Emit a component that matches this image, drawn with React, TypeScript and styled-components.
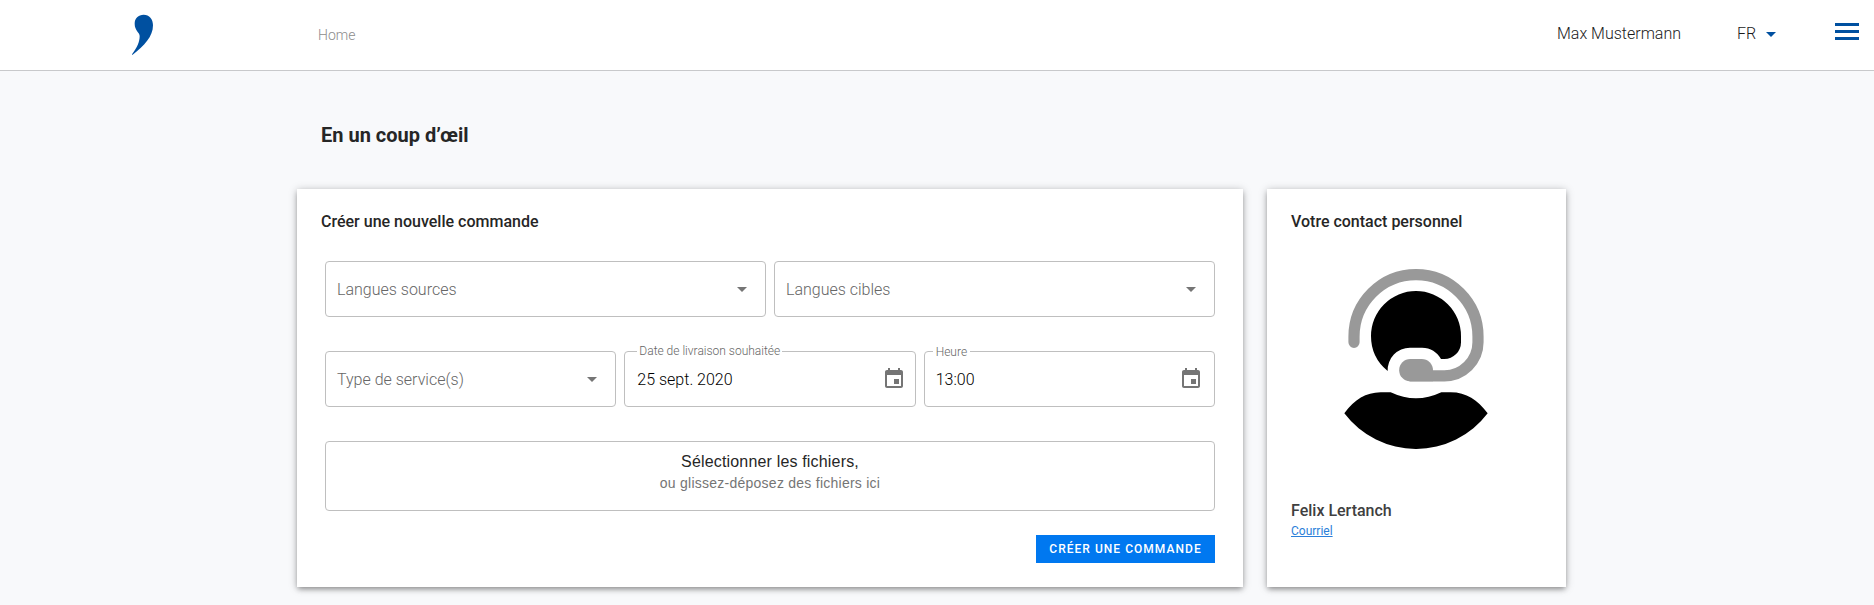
import React from "react";
import styled, { createGlobalStyle } from "styled-components";

const GlobalStyle = createGlobalStyle`
  *, *::before, *::after { box-sizing: border-box; }
  body {
    margin: 0;
    background: #f8f9fb;
    font-family: Roboto, "Liberation Sans", sans-serif;
    color: #262626;
    overflow: hidden;
  }
`;

const Page = styled.div`
  display: flex;
  flex-direction: column;
  height: 605px;
`;

const Header = styled.header`
  display: flex;
  flex: none;
  align-items: flex-start;
  height: 71px;
  padding-right: 15px;
  background: #fff;
  border-bottom: 1px solid #c8c9cb;
`;

const Logo = styled.svg`
  width: 21px;
  height: 41px;
  margin: 14px 0 0 132px;
`;

const Breadcrumb = styled.a`
  margin: 25px auto 0 165px;
  font-size: 14px;
  line-height: 20px;
  font-weight: 300;
  color: #8c8c8c;
`;

const HeaderText = styled.span`
  margin-top: 22px;
  font-size: 16px;
  line-height: 24px;
  font-weight: 300;
  color: #1a1a1a;
  white-space: nowrap;
`;

const LanguageMenu = styled.div`
  display: flex;
  gap: 3px;
  width: 98px;
  margin-left: 56px;
`;

const MenuButton = styled.div`
  display: flex;
  flex-direction: column;
  gap: 4px;
  margin-top: 23px;
`;

const MenuBar = styled.span`
  width: 24px;
  height: 3px;
  background: #0050a0;
`;

const Main = styled.main`
  padding: 50px 0 0 297px;
`;

const Title = styled.h1`
  margin: 0 0 40px 24px;
  font-size: 20px;
  line-height: 28px;
  font-weight: 700;
`;

const Cards = styled.div`
  display: flex;
  gap: 24px;
  height: 398px;
`;

const Card = styled.section<{ $width: number }>`
  display: flex;
  flex-direction: column;
  width: ${(p) => p.$width}px;
  padding: 21px 28px 0;
  background: #fff;
  box-shadow: 0 3px 5px -1px rgba(0, 0, 0, 0.3), 0 1px 8px rgba(0, 0, 0, 0.25);
`;

const CardTitle = styled.h2`
  margin: 0 -4px;
  font-size: 16px;
  line-height: 24px;
  font-weight: 500;
`;

const FieldRow = styled.div<{ $columns: number; $top: number }>`
  display: grid;
  grid-template-columns: repeat(${(p) => p.$columns}, 1fr);
  gap: 8px;
  margin-top: ${(p) => p.$top}px;
`;

const Field = styled.div<{ $end?: number }>`
  position: relative;
  display: flex;
  align-items: center;
  justify-content: space-between;
  height: 56px;
  padding: 0 ${(p) => p.$end ?? 11}px 0 11px;
  border: 1px solid #bfbfbf;
  border-radius: 4px;
`;

const Placeholder = styled.span`
  font-size: 16px;
  font-weight: 300;
  color: #666;
`;

const Value = styled.span<{ $indent?: number }>`
  margin-left: ${(p) => p.$indent ?? 0}px;
  font-size: 16px;
  font-weight: 300;
  color: #000;
`;

const FloatingLabel = styled.label<{ $left: number; $top: number; $pad: number }>`
  position: absolute;
  left: ${(p) => p.$left}px;
  top: ${(p) => p.$top}px;
  padding: 0 ${(p) => p.$pad}px;
  background: #fff;
  font-size: 12px;
  line-height: 14px;
  font-weight: 300;
  color: #666;
  white-space: nowrap;
`;

const Icon = styled.svg<{ $color: string; $top?: number }>`
  flex: none;
  width: 24px;
  height: 24px;
  margin-top: ${(p) => p.$top ?? 0}px;
  fill: ${(p) => p.$color};
`;

const DropZone = styled.div`
  display: flex;
  flex-direction: column;
  align-items: center;
  height: 70px;
  margin-top: 34px;
  padding-top: 8px;
  border: 1px solid #bfbfbf;
  border-radius: 4px;
  font-family: "Liberation Sans", Arial, sans-serif;
`;

const DropMain = styled.span`
  font-size: 16px;
  line-height: 23px;
  letter-spacing: 0.17px;
  color: #262626;
`;

const DropHint = styled.span`
  font-size: 14px;
  line-height: 20px;
  letter-spacing: 0.25px;
  color: #757575;
`;

const SubmitButton = styled.button`
  align-self: flex-end;
  width: 179px;
  height: 28px;
  margin-top: 24px;
  padding: 0;
  border: 0;
  background: #0078f0;
  color: #fff;
  font-family: inherit;
  font-size: 12px;
  font-weight: 500;
  letter-spacing: 1.03px;
  text-transform: uppercase;
  white-space: nowrap;
`;

const Avatar = styled.svg`
  flex: none;
  width: 144px;
  height: 180px;
  margin: 35px 0 0 49px;
`;

const ContactName = styled.div`
  margin: 50px -4px 0;
  font-size: 16px;
  line-height: 24px;
  font-weight: 500;
  color: #404040;
`;

const MailLink = styled.a`
  align-self: flex-start;
  margin-left: -4px;
  font-size: 12px;
  line-height: 17px;
  color: #2b7fd9;
  text-decoration: underline;
`;

const Caret = ({ color = "#757575", top = 0 }: { color?: string; top?: number }) => (
  <Icon viewBox="0 0 24 24" $color={color} $top={top}>
    <path d="M7 10l5 5 5-5z" />
  </Icon>
);

const CalendarIcon = () => (
  <Icon viewBox="0 0 24 24" $color="#757575">
    <path d="M17 12h-5v5h5v-5zM16 1v2H8V1H6v2H5c-1.11 0-1.99.9-1.99 2L3 19c0 1.1.89 2 2 2h14c1.1 0 2-.9 2-2V5c0-1.1-.9-2-2-2h-1V1h-2zm3 18H5V8h14v11z" />
  </Icon>
);

const SupportAvatar = () => (
  <Avatar viewBox="252 267 432 540">
    <path d="M383 573A135 135 0 0 1 333 468A135 135 0 0 1 603 468V487A50 50 0 0 1 553 537H543C531 516 512 503 486 503H450A67 67 0 0 0 383 573Z" />
    <path d="M253 700C285 658 317 638 362 637H392Q468 673 544 637H572C620 637 652 660 683 700A269.5 269.5 0 0 1 253 700Z" />
    <path
      d="M282 487V470A186 186 0 0 1 654 470V487A101 101 0 0 1 553 587.5H451"
      fill="none"
      stroke="#999"
      strokeWidth="33.6"
      strokeLinecap="round"
    />
    <path d="M451 537H485A34 34 0 0 1 519 571V604H451A33.5 33.5 0 0 1 451 537Z" fill="#999" />
  </Avatar>
);

export default function App() {
  return (
    <>
      <GlobalStyle />
      <Page>
        <Header>
          <Logo viewBox="96 42 63 123">
            <path
              fill="#0050a0"
              d="M131 44C148 44 159 57 159 76C159 110 133 137 97 165L96 163C112 142 119 125 119 108C119 97 104 92 104 71C104 55 115 44 131 44Z"
            />
          </Logo>
          <Breadcrumb>Home</Breadcrumb>
          <HeaderText>Max Mustermann</HeaderText>
          <LanguageMenu>
            <HeaderText>FR</HeaderText>
            <Caret color="#0050a0" top={22} />
          </LanguageMenu>
          <MenuButton>
            <MenuBar />
            <MenuBar />
            <MenuBar />
          </MenuButton>
        </Header>
        <Main>
          <Title>En un coup d’œil</Title>
          <Cards>
            <Card $width={946}>
              <CardTitle>Créer une nouvelle commande</CardTitle>
              <FieldRow $columns={2} $top={27}>
                <Field>
                  <Placeholder>Langues sources</Placeholder>
                  <Caret />
                </Field>
                <Field>
                  <Placeholder>Langues cibles</Placeholder>
                  <Caret />
                </Field>
              </FieldRow>
              <FieldRow $columns={3} $top={34}>
                <Field>
                  <Placeholder>Type de service(s)</Placeholder>
                  <Caret />
                </Field>
                <Field $end={9}>
                  <FloatingLabel $left={12} $top={-8} $pad={2}>Date de livraison souhaitée</FloatingLabel>
                  <Value $indent={1}>25 sept. 2020</Value>
                  <CalendarIcon />
                </Field>
                <Field>
                  <FloatingLabel $left={8} $top={-7} $pad={3}>Heure</FloatingLabel>
                  <Value>13:00</Value>
                  <CalendarIcon />
                </Field>
              </FieldRow>
              <DropZone>
                <DropMain>Sélectionner les fichiers,</DropMain>
                <DropHint>ou glissez-déposez des fichiers ici</DropHint>
              </DropZone>
              <SubmitButton>Créer une commande</SubmitButton>
            </Card>
            <Card $width={299}>
              <CardTitle>Votre contact personnel</CardTitle>
              <SupportAvatar />
              <ContactName>Felix Lertanch</ContactName>
              <MailLink>Courriel</MailLink>
            </Card>
          </Cards>
        </Main>
      </Page>
    </>
  );
}
